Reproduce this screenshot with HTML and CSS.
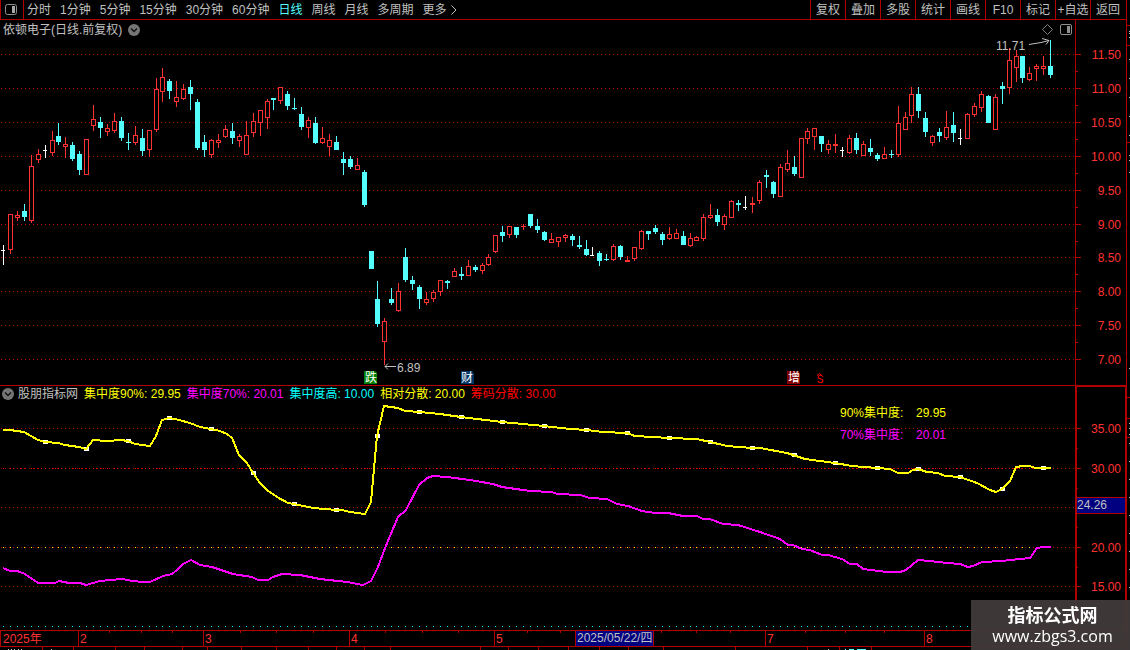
FILE: index.html
```html
<!doctype html>
<html lang="zh-CN">
<head>
<meta charset="utf-8">
<meta name="viewport" content="width=device-width, initial-scale=1.0">
<link rel="stylesheet" href="styles.css">
<title>依顿电子</title>
</head>
<body>
<div class="app">
<main class="terminal">

<header class="toolbar">
  <button class="layout-btn" aria-label="布局">
    <svg width="13" height="11" viewBox="0 0 13 11"><rect x=".5" y=".5" width="11" height="10" rx="2" fill="none" stroke="#909090"/><rect x="7" y="2" width="3" height="7" fill="#a8a8a8"/></svg>
  </button>
  <nav class="periods">
    <button>分时</button>
    <button>1分钟</button>
    <button>5分钟</button>
    <button>15分钟</button>
    <button>30分钟</button>
    <button>60分钟</button>
    <button class="active">日线</button>
    <button>周线</button>
    <button>月线</button>
    <button>多周期</button>
    <button class="more">更多<svg width="6" height="10" viewBox="0 0 6 10"><path d="M.5 .5L5 5L.5 9.5" fill="none" stroke="#c0c0c0"/></svg></button>
  </nav>
  <nav class="tools">
    <button>复权</button>
    <button>叠加</button>
    <button>多股</button>
    <button>统计</button>
    <button>画线</button>
    <button>F10</button>
    <button>标记</button>
    <button>+自选</button>
    <button>返回</button>
  </nav>
</header>

<section class="pane">
  <div class="plot">
    <div class="price-head">
      <span>依顿电子(日线.前复权)</span>
      <svg class="chevron" width="12" height="12" viewBox="0 0 12 12"><circle cx="6" cy="6" r="6" fill="#757575"/><path d="M3 4.5L6 7.5L9 4.5" fill="none" stroke="#111" stroke-width="1.4"/></svg>
      <svg class="diamond" width="11" height="11" viewBox="0 0 11 11"><path d="M5.5 .5L10.5 5.5L5.5 10.5L.5 5.5Z" fill="none" stroke="#808080"/></svg>
      <svg width="12" height="11" viewBox="0 0 12 11"><rect x=".5" y=".5" width="11" height="10" rx="1.5" fill="none" stroke="#909090"/><rect x="7" y="2" width="3" height="7" fill="#909090"/></svg>
    </div>
    <svg class="price-chart" id="price">
      <g id="price-grid"></g>
      <g id="candles"></g>
      <g class="note">
        <text x="996" y="10">11.71</text>
        <path d="M1029 4.5L1035 3.5L1041 2.5L1049 .5M1042 -1.5L1049 .5L1046 4.5"/>
        <text x="397" y="332">6.89</text>
        <path d="M385 326.5H396M388 323.5L385 326.5L388 329.5"/>
      </g>
      <g class="badge">
        <path d="M364 331h11l2 2v11h-13z" fill="#008000"/><text x="371" y="342">跌</text>
        <path d="M461 331h11l2 2v11h-13z" fill="#003366"/><text x="467" y="342">财</text>
        <path d="M787 331h11l2 2v11h-13z" fill="#800000"/><text x="794" y="342">增</text>
      </g>
      <path class="roof" d="M817 335.5L819.5 333.5L822 335.5"/>
      <text class="split" x="820" y="343">S</text>
    </svg>
  </div>
  <svg class="price-axis" id="price-axis"></svg>
</section>

<section class="pane">
  <div class="plot">
    <div class="ind-head">
      <svg class="chevron" width="12" height="12" viewBox="0 0 12 12"><circle cx="6" cy="6" r="6" fill="#757575"/><path d="M3 4.5L6 7.5L9 4.5" fill="none" stroke="#111" stroke-width="1.4"/></svg>
      <span>股朋指标网</span>
      <span class="yellow">集中度90%: 29.95</span>
      <span class="magenta">集中度70%: 20.01</span>
      <span class="cyan">集中度高: 10.00</span>
      <span class="yellow">相对分散: 20.00</span>
      <span class="red">筹码分散: 30.00</span>
    </div>
    <svg class="ind-chart" id="indicator">
      <g id="ind-grid"></g>
      <g id="ind-lines"></g>
      <text x="840" y="15" fill="#ffff00">90%集中度:</text><text x="916" y="15" fill="#ffff00">29.95</text>
      <text x="840" y="37" fill="#ff00ff">70%集中度:</text><text x="916" y="37" fill="#ff00ff">20.01</text>
    </svg>
  </div>
  <svg class="ind-axis" id="ind-axis"></svg>
</section>

<svg class="time-axis" id="time-axis"></svg>
<svg class="quote-strip" id="strip"></svg>

</main>
<svg class="side" id="side"></svg>
</div>

<a class="watermark" href="#">
  <strong>指标公式网</strong>
  <span>www.zbgs3.com</span>
</a>

<script src="chart.js"></script>
</body>
</html>
```
FILE: styles.css
```css
* {
    box-sizing: border-box;
}
body {
    margin: 0;
    background: #000;
    color: #c0c0c0;
    font-family: "Liberation Sans", "Noto Sans CJK SC", sans-serif;
    font-size: 12px;
    line-height: 16px;
}
svg {
    display: block;
    flex: none;
}
text {
    font-size: 12px;
}
button {
    margin: 0;
    padding: 0;
    border: 0;
    background: none;
    color: inherit;
    font: inherit;
    white-space: nowrap;
}
.app {
    display: flex;
    min-height: 100vh;
    overflow: hidden;
}
.terminal {
    flex: 1;
    min-width: 0;
    border-right: 1px solid #b00000;
}
.side {
    width: 3px;
    height: 650px;
}

/* toolbar */
.toolbar {
    display: flex;
    height: 20px;
    border-bottom: 1px solid #b00000;
    border-left: 1px solid #b00000;
}
.layout-btn {
    width: 23px;
    padding-left: 4px;
    border-right: 1px solid #b00000;
}
.periods {
    display: flex;
    gap: 9px;
    padding-left: 3px;
}
.active {
    color: #54ffff;
}
.more {
    display: flex;
    align-items: center;
    gap: 4px;
}
.tools {
    display: flex;
    margin-left: auto;
    padding-right: 1px;
}
.tools button {
    width: 35px;
    border-left: 1px solid #b00000;
}

/* panes */
.pane {
    display: flex;
    border-bottom: 1px solid #b00000;
}
.plot {
    flex: 1;
    min-width: 0;
}
.price-head {
    display: flex;
    align-items: center;
    height: 19px;
    margin-bottom: 1px;
    gap: 7px;
    padding: 0 3px;
}
.price-head .chevron {
    margin-left: -1px;
}
.diamond {
    margin-left: auto;
}
.price-chart {
    width: 100%;
    height: 345px;
    overflow: visible;
}
.price-axis {
    width: 51px;
    height: 365px;
    border-left: 1px solid #b00000;
}
.ind-head {
    display: flex;
    align-items: center;
    height: 16px;
    gap: 6px;
    padding-left: 2px;
    white-space: nowrap;
}
.ind-head .chevron {
    margin-right: -2px;
}
.ind-chart {
    width: 100%;
    height: 228px;
}
.ind-axis {
    width: 51px;
    height: 244px;
    border: solid #b00000;
    border-width: 1px 1px 0 2px;
}
.time-axis {
    width: 100%;
    height: 16px;
    border-bottom: 1px solid #b00000;
    border-left: 1px solid #b00000;
}
.quote-strip {
    width: 100%;
    height: 3px;
}

.yellow { color: #ffff00; }
.magenta { color: #ff00ff; }
.cyan { color: #00ffff; }
.red { color: #ff0000; }

/* chart parts */
.grid {
    stroke: #b00000;
    stroke-dasharray: 1 3;
    shape-rendering: crispEdges;
}
.axis-text {
    fill: #ff3232;
}
.line {
    fill: none;
    stroke-width: 2;
    shape-rendering: crispEdges;
}
.note text {
    fill: #c0c0c0;
}
.note path {
    fill: none;
    stroke: #c0c0c0;
}
.badge text {
    fill: #fff;
    text-anchor: middle;
}
.split {
    fill: #ff0000;
    font-size: 10px;
    text-anchor: middle;
}
.roof {
    fill: none;
    stroke: #ff0000;
}

.watermark {
    position: fixed;
    right: 0;
    bottom: 0;
    width: 159px;
    height: 50px;
    padding: 4px 0 0 4px;
    background: rgba(64, 58, 58, 0.95);
    color: #fff;
    text-align: center;
    text-decoration: none;
}
.watermark strong,
.watermark span {
    display: block;
}
.watermark strong {
    font-size: 18px;
    line-height: 24px;
}
.watermark span {
    font-family: "Open Sans", sans-serif;
    font-size: 16px;
    line-height: 16px;
}
```
FILE: chart.js
```javascript
var NS = 'http://www.w3.org/2000/svg';
var RED = '#ff3232', CYAN = '#54ffff', WHITE = '#ffffff';

// one row per day: colour, high, body top, body bottom, low
var days = [
  'w 245 250 251 265', 'r 214 214 250 254', 'r 211 215 218 221', 'c 204 211 217 221',
  'r 155 166 221 223', 'r 149 154 160 163', 'w 145 150 151 158', 'r 131 140 153 156',
  'c 123 136 142 145', 'r 137 144 147 158', 'c 142 145 159 161', 'c 151 154 170 175',
  'r 139 139 175 175', 'r 105 119 126 131', 'c 117 122 128 138', 'r 124 128 132 136',
  'r 113 121 131 133', 'c 117 121 138 141', 'c 133 142 143 150', 'r 126 135 143 145',
  'c 129 138 151 156', 'r 130 130 150 157', 'r 78 89 130 132', 'r 68 77 92 102',
  'c 79 81 91 99', 'r 81 97 102 107', 'r 84 89 99 100', 'c 80 87 94 110',
  'c 99 102 148 150', 'c 135 142 150 157', 'r 139 140 155 158', 'r 134 140 143 148',
  'r 125 129 137 138', 'c 123 131 138 144', 'r 134 136 141 147', 'r 121 135 155 155',
  'r 113 121 133 137', 'r 110 110 123 136', 'r 99 101 118 129', 'c 98 98 100 110',
  'r 87 87 101 104', 'c 91 94 106 110', 'c 98 108 109 110', 'c 107 114 127 130',
  'r 117 120 128 138', 'c 117 123 143 144', 'r 127 138 143 144', 'r 134 140 147 156',
  'c 136 142 150 150', 'c 152 159 163 175', 'c 156 159 167 169', 'r 158 165 170 170',
  'c 170 172 205 207', 'c 251 251 269 269', 'c 281 299 324 327', 'r 318 321 342 365',
  'c 288 299 303 305', 'r 283 291 311 312', 'c 248 257 280 282', 'c 276 280 284 290',
  'c 285 287 299 309', 'r 292 299 303 305', 'r 290 292 299 302', 'r 280 280 292 296',
  'c 280 281 283 289', 'r 268 271 277 277', 'c 267 274 276 280', 'r 260 266 276 276',
  'c 265 267 270 272', 'r 263 265 271 274', 'r 254 257 265 266', 'r 235 235 252 253',
  'c 226 232 236 242', 'r 226 226 235 238', 'c 227 227 235 238', 'r 224 226 227 230',
  'c 214 214 226 228', 'c 219 226 230 233', 'c 231 232 240 241', 'r 233 239 243 243',
  'r 237 237 242 247', 'r 234 235 238 242', 'c 234 236 240 246', 'c 236 245 247 249',
  'c 240 249 255 256', 'w 247 255 256 256', 'c 251 253 261 266', 'c 254 259 260 261',
  'r 244 246 260 261', 'c 245 246 257 260', 'r 256 260 262 262', 'r 247 247 259 261',
  'r 230 231 249 250', 'c 231 231 234 240', 'c 225 228 232 234', 'c 232 234 240 245',
  'r 227 234 239 240', 'r 229 233 239 239', 'c 231 236 245 245', 'r 233 238 246 247',
  'r 236 237 241 241', 'r 214 217 239 241', 'r 204 215 218 219', 'c 209 215 222 226',
  'r 214 216 225 230', 'r 200 201 218 218', 'c 200 203 205 211', 'w 196 207 208 210',
  'r 197 203 205 213', 'r 180 182 201 204', 'c 170 175 177 188', 'c 181 182 194 198',
  'r 164 167 197 197', 'r 150 163 170 172', 'c 156 167 174 176', 'r 138 138 178 178',
  'r 128 131 139 144', 'r 128 128 137 150', 'c 136 136 144 152', 'r 140 144 150 154',
  'r 134 144 146 153', 'w 147 150 151 157', 'r 135 138 153 154', 'c 133 138 150 154',
  'r 141 144 156 156', 'c 139 148 152 156', 'c 153 155 159 161', 'r 147 154 159 159',
  'c 150 154 155 158', 'r 106 123 155 157', 'r 112 117 130 130', 'r 87 94 116 123',
  'c 87 94 111 118', 'c 112 118 132 137', 'r 135 136 143 146', 'c 128 132 136 142',
  'r 111 127 138 140', 'c 112 125 133 142', 'w 129 138 139 145', 'r 113 114 139 139',
  'r 103 106 115 117', 'r 91 94 108 112', 'c 95 96 123 123', 'r 94 97 130 130',
  'c 82 86 89 104', 'r 48 60 88 94', 'r 50 56 68 82', 'c 56 56 78 83',
  'r 67 73 80 81', 'r 64 66 69 81', 'r 56 66 69 75', 'c 40 66 75 78'
];

var c90 = [[3,430],[10,430],[24,432],[31,436],[38,440],[45,442],[58,443],[65,445],[79,447],[86,449],[93,440],
  [107,441],[121,440],[128,441],[135,444],[150,446],[156,436],[162,420],[169,418],[175,419],[190,423],[200,427],
  [211,429],[220,431],[227,434],[232,438],[239,455],[247,463],[253,473],[260,483],[267,490],[277,497],[288,503],
  [294,504],[313,508],[337,510],[342,510],[350,512],[365,514],[371,502],[377,436],[384,406],[398,408],[405,411],
  [420,412],[440,414],[461,417],[502,422],[544,426],[570,429],[587,430],[603,432],[627,433],[635,436],[669,438],
  [697,439],[710,442],[727,446],[752,448],[760,448],[787,453],[805,459],[835,463],[852,466],[877,468],[890,469],
  [898,473],[908,473],[913,470],[918,469],[927,472],[938,473],[945,476],[960,477],[977,483],[990,490],[996,492],
  [1002,489],[1010,481],[1016,467],[1023,466],[1030,466],[1035,468],[1051,468]];

var c70 = [[3,568],[10,571],[17,571],[25,574],[38,583],[55,583],[59,581],[69,583],[80,583],[86,585],[93,583],
  [100,581],[122,579],[133,581],[143,582],[150,582],[163,576],[172,574],[177,570],[183,564],[191,560],[200,565],
  [212,567],[233,574],[252,577],[258,580],[268,580],[273,577],[282,574],[300,575],[320,579],[347,582],[363,585],
  [371,581],[378,567],[385,548],[398,517],[406,510],[419,485],[427,478],[433,476],[447,477],[470,480],[493,484],
  [502,487],[530,491],[552,492],[557,494],[580,495],[590,498],[607,499],[617,504],[628,506],[642,511],[655,513],
  [668,513],[683,516],[697,516],[703,519],[710,519],[723,524],[738,525],[760,532],[780,539],[788,545],[793,545],
  [802,549],[810,550],[822,555],[828,555],[842,559],[850,564],[857,564],[863,569],[887,572],[900,572],[906,570],
  [918,560],[930,561],[947,563],[960,564],[968,567],[973,566],[982,562],[1002,561],[1020,559],[1030,558],
  [1037,548],[1043,547],[1051,547]];

function add(parent, name, attrs, text) {
  var el = document.createElementNS(NS, name);
  for (var k in attrs) el.setAttribute(k, attrs[k]);
  if (text) el.textContent = text;
  parent.appendChild(el);
  return el;
}
function rect(parent, x, y, w, h, fill) {
  add(parent, 'rect', {x: x, y: y, width: w, height: h, fill: fill});
}
function $(id) { return document.getElementById(id); }
function dayX(i) { return Math.floor(3.49 + 6.935 * i); }

// height of a curve at a given x
function at(pts, x) {
  for (var i = 1; i < pts.length; i++) {
    if (pts[i][0] >= x) {
      var a = pts[i - 1], b = pts[i];
      return a[1] + (b[1] - a[1]) * (x - a[0]) / (b[0] - a[0]);
    }
  }
  return pts[pts.length - 1][1];
}

// price pane
var TOP = 40;
var prices = {'11.50': 54, '11.00': 88, '10.50': 122, '10.00': 156, '9.50': 190, '9.00': 224,
  '8.50': 257, '8.00': 291, '7.50': 325, '7.00': 359};
for (var p in prices) {
  var gy = prices[p];
  add($('price-grid'), 'line', {'class': 'grid', x1: 1, x2: '100%', y1: gy - TOP + .5, y2: gy - TOP + .5});
  rect($('price-axis'), 0, gy - 20, 5, 1, '#b00000');
  if (gy < 359) rect($('price-axis'), 0, gy - 3, 2, 1, '#b00000');
  add($('price-axis'), 'text', {'class': 'axis-text', x: 45, y: gy - 15, 'text-anchor': 'end'}, p);
}

days.forEach(function (row, i) {
  var d = row.split(' '), x = dayX(i), g = $('candles');
  var hi = d[1] - TOP, top = d[2] - TOP, bot = d[3] - TOP, lo = d[4] - TOP;
  var col = {r: RED, c: CYAN, w: WHITE}[d[0]];
  if (d[0] == 'r') {
    rect(g, x, hi, 1, lo - hi, col);
    rect(g, x - 2, top, 5, bot - top, col);
    if (bot - top > 2) rect(g, x - 1, top + 1, 3, bot - top - 2, '#000');
  } else {
    rect(g, x, hi, 1, lo - hi, col);
    rect(g, x - 2, top, d[0] == 'w' ? 4 : 5, bot - top, col);
  }
});

// indicator pane
var ITOP = 402;
[428, 468, 507, 547, 586].forEach(function (y) {
  add($('ind-grid'), 'line', {'class': 'grid', x1: 1, x2: '100%', y1: y - ITOP + .5, y2: y - ITOP + .5});
});
for (var i = 0; i < days.length; i++) {
  rect($('ind-grid'), dayX(i), 468 - ITOP, 1, 1, '#ff0000');
  if (i % 3) rect($('ind-grid'), dayX(i) + 3, 468 - ITOP, 1, 1, '#ff0000');
  rect($('ind-grid'), dayX(i), 547 - ITOP, 1, 1, '#ffff00');
  rect($('ind-grid'), dayX(i), 626 - ITOP, 1, 1, '#00ffff');
}
function curve(pts, color) {
  var s = pts.map(function (q) { return q[0] + ',' + (q[1] - ITOP); }).join(' ');
  add($('ind-lines'), 'polyline', {'class': 'line', points: s, stroke: color});
}
for (i = 6; i < days.length; i += 6) {
  rect($('ind-lines'), dayX(i) - 2, Math.round(at(c90, dayX(i))) - ITOP - 2, 5, 4, '#fff');
}
curve(c90, '#ffff00');
curve(c70, '#ff00ff');

var ia = $('ind-axis');
[['35.00', 428], ['30.00', 468], ['20.00', 547], ['15.00', 586]].forEach(function (v) {
  rect(ia, 0, v[1] - 387, 4, 1, '#b00000');
  add(ia, 'text', {'class': 'axis-text', x: 44, y: v[1] - 382, 'text-anchor': 'end'}, v[0]);
});
[448, 488, 527, 567].forEach(function (y) { rect(ia, 0, y - 387, 1, 1, '#b00000'); });
rect(ia, 0, 110, 49, 17, '#b00000');
rect(ia, 0, 111, 49, 15, '#000080');
add(ia, 'text', {x: 0, y: 122, fill: '#c0c0c0'}, '24.26');

// time axis
var ta = $('time-axis');
add(ta, 'text', {'class': 'axis-text', x: 2, y: 12}, '2025年');
[[78, '2'], [203, '3'], [349, '4'], [494, '5'], [765, '7'], [924, '8']].forEach(function (m) {
  rect(ta, m[0] - 1, 0, 1, 15, '#b00000');
  add(ta, 'text', {'class': 'axis-text', x: m[0] + 1, y: 12}, m[1]);
});
[109, 141, 172, 240, 276, 313, 385, 422, 458, 527, 560, 661, 696, 730, 805, 845, 884].forEach(function (x) {
  rect(ta, x - 1, 0, 1, 2, '#b00000');
});
rect(ta, 574, 0, 79, 15, '#b00000');
rect(ta, 575, 0, 77, 15, '#000080');
add(ta, 'text', {x: 576, y: 11, fill: '#c0c0c0'}, '2025/05/22/四');

// tops of the next row and of the next column
[42, 73, 115, 144, 182, 207, 241, 276, 308, 336, 364, 390, 480, 508, 538, 568, 599, 628, 663, 735, 807, 839, 871]
  .forEach(function (x) { rect($('strip'), x, 0, 1, 3, '#b00000'); });
[[8, 1], [11, 1], [14, 1], [18, 1], [21, 1], [51, 1], [828, 1]].forEach(function (q) {
  rect($('strip'), q[0], 2, q[1], 1, '#c0c0c0');
});
[[845, 1], [849, 5], [857, 9]].forEach(function (q) { rect($('strip'), q[0], 2, q[1], 1, CYAN); });
[25, 45, 142, 397, 418, 437].forEach(function (y) { rect($('side'), 0, y, 3, 1, '#b00000'); });
[31, 33, 37, 59, 78, 97, 116, 135, 155, 160, 172, 368, 423, 428, 434, 443, 461, 479, 497, 515, 533, 551, 569, 587]
  .forEach(function (y) { rect($('side'), 2, y, 1, 1, '#c0c0c0'); });
```
